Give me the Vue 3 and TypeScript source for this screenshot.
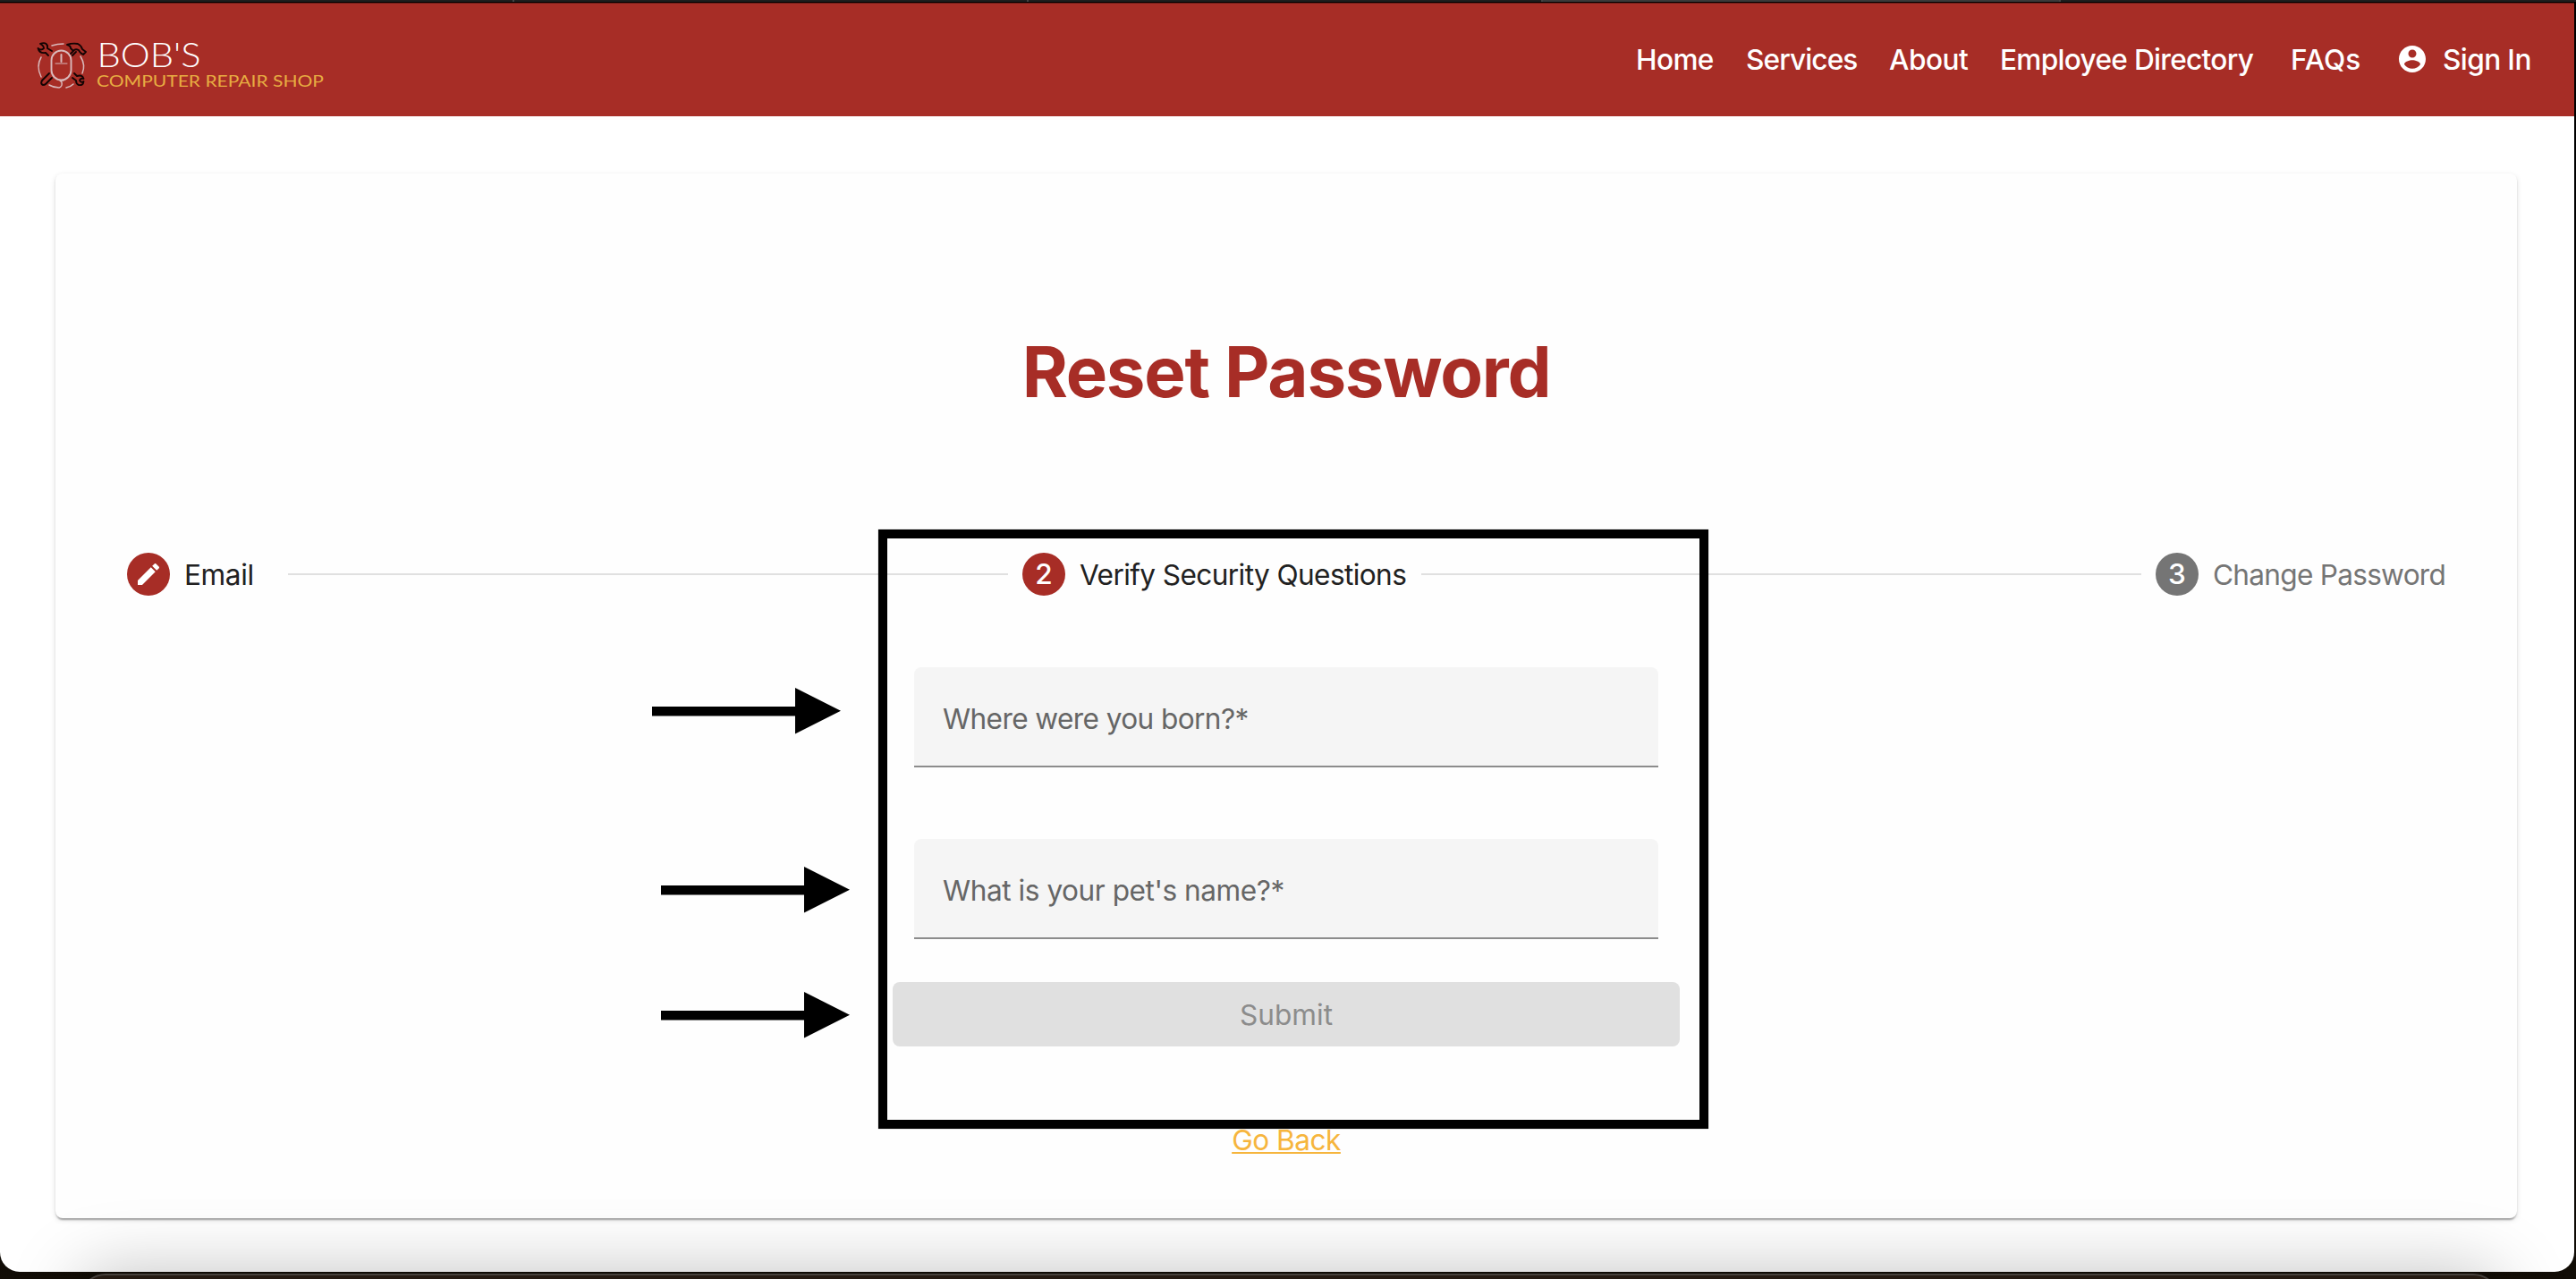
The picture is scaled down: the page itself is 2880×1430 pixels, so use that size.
<script setup lang="ts">
interface NavItem { id: string; label: string }
interface Question { id: string; label: string }
interface Arrow { left: number; top: number }

const nav: NavItem[] = [
  { id: 'home', label: 'Home' },
  { id: 'services', label: 'Services' },
  { id: 'about', label: 'About' },
  { id: 'directory', label: 'Employee Directory' },
  { id: 'faqs', label: 'FAQs' },
]

const questions: Question[] = [
  { id: 'born', label: 'Where were you born?*' },
  { id: 'pet', label: "What is your pet's name?*" },
]

const arrows: Arrow[] = [
  { left: 729, top: 769 },
  { left: 739, top: 969 },
  { left: 739, top: 1108.5 },
]
</script>

<template>
  <div class="desktop">
    <div class="tabstrip">
      <span class="tab t1"></span>
      <span class="tab t2"></span>
      <span class="tab t3"></span>
      <span class="tab active"></span>
    </div>
    <div class="window">
      <header class="toolbar">
        <div class="brand">
          <svg class="logo" viewBox="0 0 56 56" fill="none" stroke-linecap="round" stroke-linejoin="round">
            <g stroke="#d9b9bb" stroke-width="1.5">
              <path d="M17 4Q23 2 30 2" />
              <path d="M5 17Q-1 27 5 39" />
              <path d="M49 16Q55 26 51 35" />
              <path d="M14 48Q19 51 25 51Q29 50 28 45L26 43H30" />
              <path d="M33 51Q38 50 41 47" />
              <rect x="16.500" y="9.500" width="22" height="33" rx="11" stroke-width="1.900" />
              <path d="M27.500 14v8" stroke-width="2" />
              <path d="M21 24h13" stroke-width="1" />
            </g>
            <g stroke="#120303" stroke-width="1.900">
              <path d="M13 15L10 12Q3 13 1.500 7Q5 10 8 7Q8 4 4 2Q10 -0.500 12 4L12 7L17 10" />
              <path d="M34 3Q40 1 46 2Q50 4 51 8L55 11L52 14Q48 12 47 9Q43 7 41 10L38 7Q38 4 34 3ZM41 10L38 13M44 11L40 15" />
              <path d="M14 35L6 43Q4 47 7 48Q9 48 10 47L17 40" />
              <path d="M42 35L45 38Q51 36 52.500 41Q49 40 48 43Q50 46 52.500 44Q52 49 47 48Q44 47 44 43L40 40" />
            </g>
          </svg>
          <svg class="wordmark" viewBox="0 0 260 60">
            <text class="bobs" x="0.500" y="28" textLength="116" lengthAdjust="spacingAndGlyphs">BOB'S</text>
            <text class="shop" x="0" y="50" textLength="254" lengthAdjust="spacingAndGlyphs">COMPUTER REPAIR SHOP</text>
          </svg>
        </div>
        <nav class="nav">
          <a v-for="n in nav" :key="n.id" :class="n.id">{{ n.label }}</a>
          <a class="signin">
            <svg viewBox="0 0 24 24" fill="#fff"><path d="M12 2C6.480 2 2 6.480 2 12s4.480 10 10 10 10-4.480 10-10S17.520 2 12 2zm0 3c1.660 0 3 1.340 3 3s-1.340 3-3 3-3-1.340-3-3 1.340-3 3-3zm0 14.200c-2.500 0-4.710-1.280-6-3.220.030-1.990 4-3.080 6-3.080 1.990 0 5.970 1.090 6 3.080-1.290 1.940-3.500 3.220-6 3.220z" /></svg>
            <span>Sign In</span>
          </a>
        </nav>
      </header>

      <main class="card">
        <h1>Reset Password</h1>
        <div class="stepper">
          <div class="step email">
            <span class="dot">
              <svg viewBox="0 0 24 24" fill="#fff"><path d="M3 17.250V21h3.750L17.810 9.940l-3.750-3.750L3 17.250zM20.710 7.040c.390-.390.390-1.020 0-1.410l-2.340-2.340c-.390-.390-1.020-.390-1.410 0l-1.830 1.830 3.750 3.750 1.830-1.830z" /></svg>
            </span>
            <span class="label">Email</span>
          </div>
          <i class="line first"></i>
          <div class="step verify">
            <span class="dot">2</span>
            <span class="label">Verify Security Questions</span>
          </div>
          <i class="line second"></i>
          <div class="step change">
            <span class="dot">3</span>
            <span class="label">Change Password</span>
          </div>
        </div>
        <form class="form" @submit.prevent>
          <div v-for="q in questions" :key="q.id" class="field" :class="q.id">
            <span>{{ q.label }}</span>
          </div>
          <button type="button" disabled><span>Submit</span></button>
          <a class="back">Go Back</a>
        </form>
      </main>
    </div>

    <div class="dock"></div>
    <div class="highlight"></div>
    <svg
      v-for="(a, i) in arrows"
      :key="i"
      class="arrow"
      viewBox="0 0 211 52"
      :style="{ left: a.left + 'px', top: a.top + 'px' }"
    >
      <path d="M0 21H160V0L211 25.800L160 51.500V31.500H0Z" />
    </svg>
  </div>
</template>

<style>
html,
body {
  margin: 0;
  background: #000;
  overflow: hidden;
}
</style>

<style scoped>
.desktop {
  position: relative;
  width: 2880px;
  height: 1430px;
  overflow: hidden;
  background: linear-gradient(#000 1200px, #120d06 1430px);
  font-family: Inter, "Liberation Sans", sans-serif;
  font-size: 31.6px;
  line-height: 40px;
  letter-spacing: -0.600px;
  white-space: nowrap;
}
.tabstrip {
  display: flex;
  height: 2px;
  margin-bottom: 1px;
  background: #1e1e1e;
}
.tab {
  box-sizing: border-box;
  width: 575px;
  border-right: 2px solid #444;
}
.tab.active {
  width: 579px;
  background: #3a3a3a;
}
.window {
  width: 2878px;
  height: 1419px;
  overflow: hidden;
  background: #fff;
  border-radius: 0 0 22px 22px;
}
.toolbar {
  box-sizing: border-box;
  display: flex;
  justify-content: space-between;
  height: 127px;
  border-top: 1px solid #6b1d19;
  background: #a72d26;
  color: #fff;
}
.brand {
  display: flex;
  padding: 43px 0 0 41px;
}
.logo {
  width: 56px;
  height: 56px;
  overflow: visible;
}
.wordmark {
  width: 260px;
  height: 60px;
  margin-left: 11px;
  overflow: visible;
  font-family: Lato, sans-serif;
  letter-spacing: 0;
}
.bobs {
  font-size: 37px;
  font-weight: 300;
  fill: #fff;
}
.shop {
  font-size: 18.200px;
  font-weight: 400;
  fill: #e7ad42;
}
.nav {
  display: flex;
  padding-top: 43px;
  font-weight: 500;
}
.nav a {
  display: block;
}
.home { width: 123px; }
.services { width: 160px; letter-spacing: -0.900px; }
.about { width: 124px; letter-spacing: -0.500px; }
.directory { width: 325px; letter-spacing: -0.700px; }
.faqs { width: 118px; letter-spacing: 0; }
.nav .signin {
  display: flex;
  width: 199px;
}
.signin svg {
  width: 36px;
  height: 36px;
  margin: 1px 16px 0 0;
}
.card {
  box-sizing: border-box;
  width: 2752px;
  height: 1168px;
  margin: 64px 0 0 62px;
  padding-top: 182px;
  border-radius: 8px;
  background: #fefefe;
  box-shadow: 0 4px 2px -2px rgba(0, 0, 0, 0.2), 0 2px 2px rgba(0, 0, 0, 0.14), 0 2px 6px rgba(0, 0, 0, 0.12);
}
h1 {
  margin: 0;
  color: #a72d26;
  font-size: 78px;
  font-weight: 700;
  line-height: 80px;
  letter-spacing: -1.250px;
  text-align: center;
}
.stepper {
  display: flex;
  align-items: center;
  height: 48px;
  margin-top: 162px;
  padding-left: 80px;
}
.step {
  display: flex;
  align-items: center;
  color: #212121;
}
.label {
  padding-top: 1px;
}
.dot {
  display: flex;
  align-items: center;
  justify-content: center;
  width: 48px;
  height: 48px;
  margin-right: 16px;
  border-radius: 50%;
  background: #a72d26;
  color: #fff;
  font-weight: 500;
  letter-spacing: 0;
}
.dot svg {
  width: 32px;
  height: 32px;
}
.email { width: 180px; letter-spacing: -0.400px; }
.verify { width: 446px; }
.change { color: #757575; letter-spacing: -0.730px; }
.change .dot { background: #757575; }
.line {
  height: 2px;
  background: #e0e0e0;
}
.first { width: 805px; margin-right: 16px; }
.second { width: 805px; margin-right: 16px; }
.form {
  display: flex;
  flex-direction: column;
  width: 880px;
  margin: 80px 0 0 936px;
}
.field {
  box-sizing: border-box;
  display: flex;
  align-items: center;
  width: 832px;
  height: 112px;
  margin: 0 0 80px 24px;
  padding: 5px 0 0 32px;
  border-bottom: 2px solid #8c8c8c;
  border-radius: 8px 8px 0 0;
  background: #f5f5f5;
  color: #666;
}
.pet {
  margin-bottom: 48px;
  letter-spacing: -0.450px;
}
button {
  height: 72px;
  padding: 1px 0 0;
  border: 0;
  border-radius: 8px;
  background: #e0e0e0;
  color: #8c8c8c;
  font: inherit;
  letter-spacing: 0;
}
.back {
  margin-top: 85px;
  align-self: center;
  color: #f6b53d;
  letter-spacing: -0.500px;
  text-decoration: underline;
  text-decoration-thickness: 2px;
  text-underline-offset: 2px;
}
.dock {
  position: absolute;
  left: 88px;
  top: 1424px;
  width: 2707px;
  height: 80px;
  box-sizing: border-box;
  border: 2px solid #45403b;
  border-radius: 30px;
  background: #241a12;
  box-shadow: 0 0 80px rgba(0, 0, 0, 0.26);
}
.highlight {
  position: absolute;
  box-sizing: border-box;
  left: 982px;
  top: 592px;
  width: 928px;
  height: 670px;
  border: 10px solid #000;
  box-shadow: 0 0 1px rgba(0, 0, 0, 0.5);
}
.arrow {
  position: absolute;
  width: 211px;
  height: 52px;
}
</style>
